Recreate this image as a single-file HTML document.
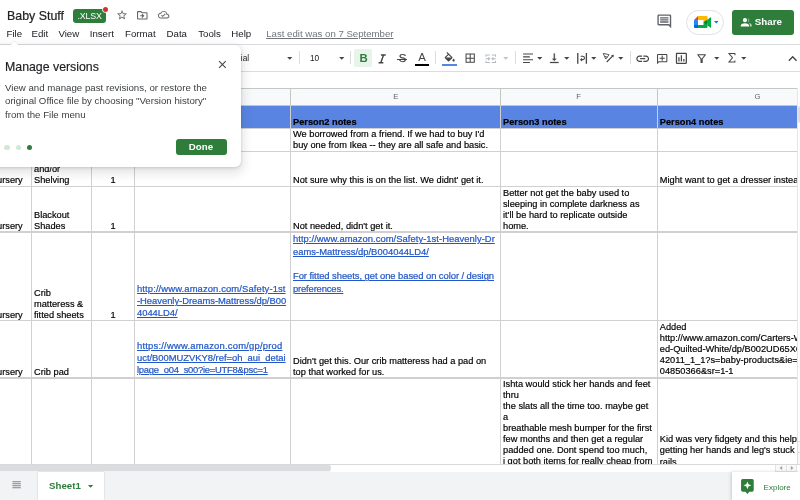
<!DOCTYPE html>
<html lang="en"><head><meta charset="utf-8"><title>Baby Stuff</title>
<style>
*{box-sizing:border-box;margin:0;padding:0}
html,body{width:800px;height:500px;overflow:hidden;background:#fff}
body{font-family:"Liberation Sans",Arial,sans-serif;color:#000;position:relative}
.abs,.ic,.sep,.t,.cell,.hl,.vl{position:absolute}
.ic{display:block;overflow:visible}
#grid,#top,#toolbar,#promo,#bottom{will-change:transform;position:absolute;left:0;top:0;width:800px;height:500px}
.t{white-space:pre;line-height:1}
.sep{width:1px;background:#dadce0}
.menu{font-size:9.7px;color:#202124;top:29px}
.cell{overflow:hidden;font-size:9.24px;line-height:11.09px;white-space:pre;color:#000;-webkit-text-stroke:.18px #000}
.cell>div{position:absolute;left:2px}
.lnk{color:#2257c5;-webkit-text-stroke:.22px #2257c5;text-decoration:underline;font-size:9.42px;line-height:12.3px}
.hl{height:1.25px;background:#d0d0d0;left:0}
.vl{width:1.15px;background:#d0d0d0}
.ch{font-size:7.6px;color:#5f6368;top:92.6px}
</style></head><body>

<div id="grid">
<div class="abs" style="left:0;top:88px;width:797px;height:17px;background:#f8f9fa"></div>
<div class="abs" style="left:0;top:105px;width:797px;height:22.8px;background:#5984e2"></div>
<span class="t ch" style="left:393.3px">E</span>
<span class="t ch" style="left:576.2px">F</span>
<span class="t ch" style="left:754.6px">G</span>
<div class="hl" style="top:88px;width:800px;background:#c4c7c5"></div>
<div class="hl" style="top:104.6px;width:797px;background:#c4c7c5"></div>
<div class="hl" style="top:127.5px;width:797px;background:#d0d0d0"></div>
<div class="hl" style="top:150.7px;width:797px;background:#d0d0d0"></div>
<div class="hl" style="top:185.8px;width:797px;background:#d0d0d0"></div>
<div class="hl" style="top:231.4px;width:797px;background:#d0d0d0"></div>
<div class="hl" style="top:320.1px;width:797px;background:#d0d0d0"></div>
<div class="hl" style="top:377.3px;width:797px;background:#d0d0d0"></div>
<div class="vl" style="left:31px;top:88px;height:376px"></div>
<div class="vl" style="left:31px;top:88px;height:17px;background:#c4c7c5"></div>
<div class="vl" style="left:91.3px;top:88px;height:376px"></div>
<div class="vl" style="left:91.3px;top:88px;height:17px;background:#c4c7c5"></div>
<div class="vl" style="left:134.2px;top:88px;height:376px"></div>
<div class="vl" style="left:134.2px;top:88px;height:17px;background:#c4c7c5"></div>
<div class="vl" style="left:290.2px;top:88px;height:376px"></div>
<div class="vl" style="left:290.2px;top:88px;height:17px;background:#c4c7c5"></div>
<div class="vl" style="left:500px;top:88px;height:376px"></div>
<div class="vl" style="left:500px;top:88px;height:17px;background:#c4c7c5"></div>
<div class="vl" style="left:656.8px;top:88px;height:376px"></div>
<div class="vl" style="left:656.8px;top:88px;height:17px;background:#c4c7c5"></div>
<div class="vl" style="left:796.8px;top:88px;height:376px"></div>
<div class="vl" style="left:796.8px;top:88px;height:17px;background:#c4c7c5"></div>
<div class="cell" style="left:291px;top:105px;width:209px;height:23px"><div class="" style="top:12.4px;font-weight:bold;">Person2 notes</div></div>
<div class="cell" style="left:501px;top:105px;width:156px;height:23px"><div class="" style="top:12.4px;font-weight:bold;">Person3 notes</div></div>
<div class="cell" style="left:657.8px;top:105px;width:139.20000000000005px;height:23px"><div class="" style="top:12.4px;font-weight:bold;">Person4 notes</div></div>
<div class="cell" style="left:291px;top:128px;width:209px;height:23px"><div class="" style="top:1px;">We borrowed from a friend. If we had to buy I'd<br>buy one from Ikea -- they are all safe and basic.</div></div>
<div class="cell" style="left:-11.6px;top:151px;width:42.6px;height:35px"><div class="" style="top:24.4px;">Nursery</div></div>
<div class="cell" style="left:32px;top:151px;width:59px;height:35px"><div class="" style="top:13.31px;">and/or<br>Shelving</div></div>
<div class="cell" style="left:92px;top:151px;width:42px;height:35px"><div class="" style="top:24.4px;left:0;right:0;text-align:center;">1</div></div>
<div class="cell" style="left:291px;top:151px;width:209px;height:35px"><div class="" style="top:24.4px;">Not sure why this is on the list. We didnt' get it.</div></div>
<div class="cell" style="left:657.8px;top:151px;width:139.20000000000005px;height:35px"><div class="" style="top:24.4px;">Might want to get a dresser instead of a changing table</div></div>
<div class="cell" style="left:-11.6px;top:186px;width:42.6px;height:46px"><div class="" style="top:35.1px;">Nursery</div></div>
<div class="cell" style="left:32px;top:186px;width:59px;height:46px"><div class="" style="top:24.01px;">Blackout<br>Shades</div></div>
<div class="cell" style="left:92px;top:186px;width:42px;height:46px"><div class="" style="top:35.1px;left:0;right:0;text-align:center;">1</div></div>
<div class="cell" style="left:291px;top:186px;width:209px;height:46px"><div class="" style="top:35.1px;">Not needed, didn't get it.</div></div>
<div class="cell" style="left:501px;top:186px;width:156px;height:46px"><div class="" style="top:1.8px;">Better not get the baby used to<br>sleeping in complete darkness as<br>it'll be hard to replicate outside<br>home.</div></div>
<div class="cell" style="left:-11.6px;top:232px;width:42.6px;height:88px"><div class="" style="top:78.2px;">Nursery</div></div>
<div class="cell" style="left:32px;top:232px;width:59px;height:88px"><div class="" style="top:56.02px;">Crib<br>matteress &amp;<br>fitted sheets</div></div>
<div class="cell" style="left:92px;top:232px;width:42px;height:88px"><div class="" style="top:78.2px;left:0;right:0;text-align:center;">1</div></div>
<div class="cell" style="left:135px;top:232px;width:155px;height:88px"><div class="lnk" style="top:50.8px;line-height:12.3px;"><span style="letter-spacing:0.118px">http://www.amazon.com/Safety-1st</span><br><span style="letter-spacing:-0.029px">-Heavenly-Dreams-Mattress/dp/B00</span><br><span style="letter-spacing:-0.037px">4044LD4/</span></div></div>
<div class="cell" style="left:291px;top:232px;width:209px;height:88px"><div class="lnk" style="top:1.2px;line-height:12.4px;"><span style="letter-spacing:0.036px">http://www.amazon.com/Safety-1st-Heavenly-Dr</span><br><span style="letter-spacing:0.014px">eams-Mattress/dp/B004044LD4/</span><br><br><span style="letter-spacing:-0.059px">For fitted sheets, get one based on color / design</span><br><span style="letter-spacing:-0.158px">preferences.</span></div></div>
<div class="cell" style="left:-11.6px;top:320px;width:42.6px;height:58px"><div class="" style="top:46.8px;">Nursery</div></div>
<div class="cell" style="left:32px;top:320px;width:59px;height:58px"><div class="" style="top:46.8px;">Crib pad</div></div>
<div class="cell" style="left:135px;top:320px;width:155px;height:58px"><div class="lnk" style="top:19.9px;line-height:12.2px;"><span style="letter-spacing:0.211px">https://www.amazon.com/gp/prod</span><br><span style="letter-spacing:-0.022px">uct/B00MUZVKY8/ref=oh_aui_detai</span><br><span style="letter-spacing:-0.254px">lpage_o04_s00?ie=UTF8&amp;psc=1</span></div></div>
<div class="cell" style="left:291px;top:320px;width:209px;height:58px"><div class="" style="top:35.6px;">Didn't get this. Our crib matteress had a pad on<br>top that worked for us.</div></div>
<div class="cell" style="left:657.8px;top:320px;width:139.20000000000005px;height:58px"><div class="" style="top:2px;">Added<br>http://www.amazon.com/Carters-Wat<br>ed-Quilted-White/dp/B002UD65XG<br>42011_1_1?s=baby-products&amp;ie=U<br>04850366&amp;sr=1-1</div></div>
<div class="cell" style="left:501px;top:378px;width:156px;height:86px"><div class="" style="top:0.7px;">Ishta would stick her hands and feet<br>thru<br>the slats all the time too. maybe get<br>a<br>breathable mesh bumper for the first<br>few months and then get a regular<br>padded one. Dont spend too much,<br>i got both items for really cheap from<br>amazon.</div></div>
<div class="cell" style="left:657.8px;top:378px;width:139.20000000000005px;height:86px"><div class="" style="top:56.4px;">Kid was very fidgety and this helped<br>getting her hands and leg's stuck in<br>rails</div></div>
</div>
<div id="bottom">
<div class="abs" style="left:797px;top:88px;width:3px;height:376px;background:#fff;border-left:1px solid #e6e6e6"></div>
<div class="abs" style="left:797.5px;top:106px;width:5px;height:17px;background:#dadce0;border-radius:3px"></div>
<div class="abs" style="left:0;top:464px;width:800px;height:7.5px;background:#fff;border-top:1px solid #d9d9d9"></div>
<div class="abs" style="left:0;top:464.5px;width:331px;height:7px;background:#f1f3f4"></div>
<div class="abs" style="left:-6px;top:465px;width:336.5px;height:6.2px;background:#dadce0;border-radius:3px"></div>
<div class="abs" style="left:775px;top:464.5px;width:22px;height:7px;background:#f8f9fa;border:1px solid #e3e3e3;border-top:none"></div>
<div class="abs" style="left:786px;top:464.5px;width:1px;height:7px;background:#e3e3e3"></div>
<svg class="ic" style="left:778.5px;top:466px" width="4" height="4" viewBox="0 0 4 4"><path fill="#9aa0a6" d="M3.2 0v4L.6 2z"/></svg>
<svg class="ic" style="left:789.6px;top:466px" width="4" height="4" viewBox="0 0 4 4"><path fill="#9aa0a6" d="M.8 0v4l2.600-2z"/></svg>
<div class="abs" style="left:797px;top:441px;width:3px;height:23px;background:#f8f9fa;border-left:1px solid #dadce0;border-top:1px solid #dadce0"></div>
<div class="abs" style="left:797px;top:452px;width:3px;height:1px;background:#dadce0"></div>
<div class="abs" style="left:0;top:471.5px;width:800px;height:28.5px;background:#f1f3f4"></div>
<div class="abs" style="left:37.5px;top:471.5px;width:66.5px;height:28.5px;background:#fff;box-shadow:0 0 1.5px rgba(60,64,67,.25)"></div>
<svg class="ic" style="left:11.2px;top:479.3px" width="11.2" height="11.2" viewBox="0 0 24 24" ><path fill="#80868b" d="M3 5h18v2.200H3zm0 4.300h18v2.200H3zm0 4.300h18v2.200H3zm0 4.300h18v2.200H3z"/></svg>
<span class="t" style="left:49px;top:481.4px;font-size:9.7px;color:#2e7d3a;font-weight:bold">Sheet1</span>
<svg class="ic" style="left:87.6px;top:484.8px" width="5.2" height="2.8" viewBox="0 0 10 5"><path fill="#2e7d3a" d="M0 0h10L5 5z"/></svg>
<div class="abs" style="left:732px;top:472px;width:68px;height:28px;background:#fff;box-shadow:-1px 0 3px rgba(60,64,67,.22)"></div>
<svg class="ic" style="left:741px;top:479.4px" width="12.800" height="15.200" viewBox="0 0 20 24"><path fill="#2e7d3a" d="M2.500 0h15A2.500 2.500 0 0 1 20 2.500v15a2.500 2.500 0 0 1-2.500 2.500H13l-3 3.600L7 20H2.500A2.500 2.500 0 0 1 0 17.500v-15A2.500 2.500 0 0 1 2.500 0z"/><path fill="#fff" d="M10 3.800l1.700 4.500 4.500 1.700-4.500 1.700L10 16.200l-1.700-4.500L3.800 10l4.500-1.700z"/></svg>
<span class="t" style="left:763.6px;top:483.8px;font-size:8px;color:#2e7d3a">Explore</span>
</div>
<div id="top">
<div class="abs" style="left:0;top:44px;width:800px;height:1px;background:#dadce0"></div>
<div class="abs" style="left:0;top:71px;width:800px;height:1px;background:#dadce0"></div>
<span class="t" style="left:7px;top:9.8px;font-size:12.4px;color:#202124;-webkit-text-stroke:.2px #202124">Baby Stuff</span>
<div class="abs" style="left:73.2px;top:8.6px;width:33px;height:14.8px;background:#2e7d3a;border-radius:3px"></div>
<span class="t" style="left:77.5px;top:12.4px;font-size:8.8px;color:#fff;letter-spacing:-.15px">.XLSX</span>
<div class="abs" style="left:102.7px;top:6.8px;width:5.4px;height:5.4px;border-radius:50%;background:#d93025;box-shadow:0 0 0 .8px #fff"></div>
<svg class="ic" style="left:115.9px;top:8.9px" width="12" height="12" viewBox="0 0 24 24" ><path fill="#5f6368" d="M22 9.24l-7.19-.62L12 2 9.19 8.63 2 9.24l5.46 4.73L5.82 21 12 17.27 18.18 21l-1.63-7.03L22 9.24zM12 15.4l-3.76 2.27 1-4.28-3.32-2.88 4.38-.38L12 6.1l1.71 4.04 4.38.38-3.32 2.88 1 4.28L12 15.4z"/></svg>
<svg class="ic" style="left:135.9px;top:8.7px" width="12.6" height="12.6" viewBox="0 0 24 24" ><path fill="#5f6368" d="M20 6h-8l-2-2H4c-1.1 0-2 .9-2 2v12c0 1.1.9 2 2 2h16c1.1 0 2-.9 2-2V8c0-1.1-.9-2-2-2zm0 12H4V6h5.17l2 2H20v10zm-7.84-6H8v2h4.16l-1.59 1.59L11.99 17 16 13.01 11.99 9l-1.41 1.41L12.16 12z"/></svg>
<svg class="ic" style="left:157.9px;top:9.4px" width="11.4" height="11.4" viewBox="0 0 24 24" ><path fill="#5f6368" d="M19.35 10.04C18.67 6.59 15.64 4 12 4 9.11 4 6.6 5.64 5.35 8.04 2.34 8.36 0 10.91 0 14c0 3.31 2.69 6 6 6h13c2.76 0 5-2.24 5-5 0-2.64-2.05-4.78-4.65-4.96zM19 18H6c-2.21 0-4-1.79-4-4 0-2.05 1.53-3.76 3.56-3.97l1.07-.11.5-.95C8.08 7.14 9.94 6 12 6c2.62 0 4.88 1.86 5.39 4.43l.3 1.5 1.53.11c1.56.1 2.78 1.41 2.78 2.96 0 1.65-1.35 3-3 3zm-9-3.82l-2.09-2.09L6.5 13.5 10 17l6.01-6.01-1.41-1.41z"/></svg>
<span class="t menu" style="left:6.5px">File</span>
<span class="t menu" style="left:31.5px">Edit</span>
<span class="t menu" style="left:58.4px">View</span>
<span class="t menu" style="left:89.7px">Insert</span>
<span class="t menu" style="left:125px">Format</span>
<span class="t menu" style="left:166.5px">Data</span>
<span class="t menu" style="left:198.2px">Tools</span>
<span class="t menu" style="left:231.3px">Help</span>
<span class="t" style="left:266.2px;top:29px;font-size:9.64px;color:#70757a;text-decoration:underline">Last edit was on 7 September</span>
<svg class="ic" style="left:656.1px;top:13.4px" width="16.6" height="16.6" viewBox="0 0 24 24" ><path fill="#5f6368" d="M21.99 4c0-1.1-.89-2-1.99-2H4c-1.1 0-2 .9-2 2v12c0 1.1.9 2 2 2h14l4 4-.01-18zM20 4v13.17L18.83 16H4V4h16zM6 12h12v2H6zm0-3h12v2H6zm0-3h12v2H6z"/></svg>
<div class="abs" style="left:686.3px;top:9.6px;width:37.4px;height:25.4px;border:1px solid #dfe1e5;border-radius:13px;background:#fff"></div>
<svg class="ic" style="left:693.7px;top:16.2px" width="17" height="12.200" viewBox="0 0 34 24">
<path fill="#00832d" d="M19 12l3.300 3.800 4.500 2.800.8-6.600-.8-6.500-4.600 2.500z"/>
<path fill="#0066da" d="M0 18v4a2 2 0 0 0 2 2h6l1.200-4.500L8 18l-4-1.200z"/>
<path fill="#e94235" d="M8 0L0 8l4 1.200L8 8l1.200-3.800z"/>
<path fill="#2684fc" d="M0 8h8v10H0z"/>
<path fill="#00ac47" d="M32.300 2.800L27 7.200v11.400l5.300 4.400c.8.600 1.700 0 1.700-.9V3.700c0-.9-1-1.500-1.700-.9zM19 12v6H8v6h17a2 2 0 0 0 2-2v-3.400z"/>
<path fill="#ffba00" d="M25 0H8v8h11v4l8-4.800V2a2 2 0 0 0-2-2z"/>
</svg>
<svg class="ic" style="left:713.5px;top:20.95px" width="4.6" height="2.5" viewBox="0 0 10 5"><path fill="#1a73e8" d="M0 0h10L5 5z"/></svg>
<div class="abs" style="left:732px;top:9.6px;width:62px;height:25px;background:#2e7d3a;border-radius:3px"></div>
<svg class="ic" style="left:739.8px;top:15.6px" width="12.500" height="12.500" viewBox="0 0 24 24"><path fill="#fff" d="M9.500 12a4 4 0 1 0 0-8 4 4 0 0 0 0 8zm0 2c-2.700 0-8 1.340-8 4v2h16v-2c0-2.660-5.300-4-8-4z"/><path fill="#fff" fill-opacity=".7" d="M15 4.200a4 4 0 0 1 0 7.600 5.800 5.800 0 0 0 0-7.600zM17.500 13.600c2.400.6 5 1.900 5 4.400v2h-3.500v-2c0-1.800-.6-3.300-1.500-4.400z"/></svg>
<span class="t" style="left:754.7px;top:17.2px;font-size:9.8px;color:#fff;font-weight:bold">Share</span>
</div>
<div id="toolbar">
<span class="t" style="left:232.5px;top:53.6px;font-size:8.3px;color:#202124">Arial</span>
<svg class="ic" style="left:287.25px;top:57.32px" width="5.5" height="2.65" viewBox="0 0 10 5"><path fill="#444746" d="M0 0h10L5 5z"/></svg>
<div class="sep" style="left:299.1px;top:51.2px;height:13.299999999999997px"></div>
<span class="t" style="left:310px;top:53.6px;font-size:8.3px;color:#202124">10</span>
<svg class="ic" style="left:339.05px;top:57.32px" width="5.5" height="2.65" viewBox="0 0 10 5"><path fill="#444746" d="M0 0h10L5 5z"/></svg>
<div class="sep" style="left:349.8px;top:51.2px;height:13.299999999999997px"></div>
<div class="abs" style="left:354.3px;top:49.3px;width:18px;height:17.8px;background:#e6f4ea;border-radius:2px"></div>
<span class="t" style="left:359.6px;top:53.1px;font-size:11.4px;font-weight:bold;color:#2e7d3a">B</span>
<svg class="ic" style="left:375.4px;top:52.2px" width="14.3" height="14.3" viewBox="0 0 24 24" fill="none" stroke="#444746" stroke-width="2.4"><path d="M10 4.900h8M6 17.900h8M14.300 4.900L9.700 17.900"/></svg>
<span class="t" style="left:398.8px;top:52.6px;font-size:11.4px;color:#444746;-webkit-text-stroke:.25px #444746">S</span>
<div class="abs" style="left:397.4px;top:58.5px;width:9.8px;height:1.2px;background:#444746"></div>
<span class="t" style="left:418.2px;top:51.7px;font-size:11.4px;color:#444746">A</span>
<div class="abs" style="left:415.2px;top:63.7px;width:14.2px;height:2.3px;background:#000"></div>
<div class="sep" style="left:435px;top:51.2px;height:13.299999999999997px"></div>
<svg class="ic" style="left:442.8px;top:52.3px" width="13.4" height="11.2" viewBox="0 0 24 20" ><path fill="#444746" d="M16.56 8.94L7.62 0 6.21 1.41l2.38 2.38-5.15 5.15c-.59.59-.59 1.54 0 2.12l5.5 5.5c.29.29.68.44 1.06.44s.77-.15 1.06-.44l5.5-5.5c.59-.58.59-1.53 0-2.12zM5.21 10L10 5.21 14.79 10H5.21zM19 11.5s-2 2.17-2 3.5c0 1.1.9 2 2 2s2-.9 2-2c0-1.33-2-3.5-2-3.5z"/></svg>
<div class="abs" style="left:442px;top:63.7px;width:14.7px;height:2.4px;background:#5984e2"></div>
<svg class="ic" style="left:463.6px;top:52.3px" width="12.4" height="12.4" viewBox="0 0 24 24" ><path fill="#444746" d="M3 3v18h18V3H3zm8 16H5v-6h6v6zm0-8H5V5h6v6zm8 8h-6v-6h6v6zm0-8h-6V5h6v6z"/></svg>
<svg class="ic" style="left:484.9px;top:54.15px" width="11.5" height="9.58" viewBox="0 0 24 20" fill="none" stroke="#b6babf" stroke-width="2.1"><path d="M2 6V2h8M14 2h8v4M22 14v4h-8M10 18H2v-4M1.500 10h8M6.500 7l3 3-3 3M22.500 10h-8M17.500 7l-3 3 3 3"/></svg>
<svg class="ic" style="left:503.05px;top:57.32px" width="5.5" height="2.65" viewBox="0 0 10 5"><path fill="#bfc3c7" d="M0 0h10L5 5z"/></svg>
<div class="sep" style="left:515px;top:51.2px;height:13.299999999999997px"></div>
<svg class="ic" style="left:521.5px;top:52.4px" width="12.6" height="12.6" viewBox="0 0 24 24" fill="none" stroke="#444746" stroke-width="2"><path d="M2 4h19M2 9.300h13M2 14.600h19M2 19.900h13"/></svg>
<svg class="ic" style="left:536.55px;top:57.32px" width="5.5" height="2.65" viewBox="0 0 10 5"><path fill="#444746" d="M0 0h10L5 5z"/></svg>
<svg class="ic" style="left:548.2px;top:52.4px" width="12.6" height="12.6" viewBox="0 0 24 24" stroke="#444746" stroke-width=".5"><path fill="#444746" d="M16 13h-3V3h-2v10H8l4 4 4-4zM4 19v2h16v-2H4z"/></svg>
<svg class="ic" style="left:563.55px;top:57.32px" width="5.5" height="2.65" viewBox="0 0 10 5"><path fill="#444746" d="M0 0h10L5 5z"/></svg>
<svg class="ic" style="left:575.8px;top:52.4px" width="12.6" height="12.6" viewBox="0 0 24 24" fill="none" stroke="#444746" stroke-width="2.5"><path d="M3.400 1.800v20.400M19.800 1.800v20.400"/><path d="M8.800 8h4a3.300 3.300 0 0 1 0 6.600H10" stroke-width="2.100"/><path d="M11.600 11L7.400 14.600l4.200 3.600z" fill="#444746" stroke="none"/></svg>
<svg class="ic" style="left:590.75px;top:57.32px" width="5.5" height="2.65" viewBox="0 0 10 5"><path fill="#444746" d="M0 0h10L5 5z"/></svg>
<svg class="ic" style="left:602.4px;top:52.4px" width="12.6" height="12.6" viewBox="0 0 24 24" fill="none" stroke="#444746" stroke-width="2"><path d="M2.300 2.600l11.200 2.600-6.400 8.300zM5.300 8.200l5.200 2" stroke-width="1.700" stroke-linejoin="round"/><path d="M9 19l11.500-11.500" stroke-width="2.200"/><path d="M22.600 5.200l-1 5.400-4.400-4.400z" fill="#444746" stroke="none"/></svg>
<svg class="ic" style="left:617.75px;top:57.32px" width="5.5" height="2.65" viewBox="0 0 10 5"><path fill="#444746" d="M0 0h10L5 5z"/></svg>
<div class="sep" style="left:629.5px;top:51.2px;height:13.299999999999997px"></div>
<svg class="ic" style="left:634.9px;top:50.9px" width="15.4" height="15.4" viewBox="0 0 24 24" ><path fill="#444746" d="M3.9 12c0-1.71 1.39-3.1 3.1-3.1h4V7H7c-2.76 0-5 2.24-5 5s2.24 5 5 5h4v-1.9H7c-1.71 0-3.1-1.39-3.1-3.1zM8 13h8v-2H8v2zm9-6h-4v1.9h4c1.71 0 3.1 1.39 3.1 3.1s-1.39 3.1-3.1 3.1h-4V17h4c2.76 0 5-2.24 5-5s-2.24-5-5-5z"/></svg>
<svg class="ic" style="left:655.8px;top:52.6px" width="12.4" height="12.4" viewBox="0 0 24 24" transform="scale(-1,1)"><path fill="#444746" d="M22 4c0-1.1-.9-2-2-2H4c-1.1 0-2 .9-2 2v12c0 1.1.9 2 2 2h14l4 4V4zm-2 13.17L18.83 16H4V4h16v13.17zM11 5h2v4h4v2h-4v4h-2v-4H7V9h4z"/></svg>
<svg class="ic" style="left:674px;top:51px" width="14.8" height="14.8" viewBox="0 0 24 24" ><path fill="#444746" d="M9 17H7v-7h2v7zm4 0h-2V7h2v10zm4 0h-2v-4h2v4zm2 2H5V5h14v14zm0-16H5c-1.1 0-2 .9-2 2v14c0 1.1.9 2 2 2h14c1.1 0 2-.9 2-2V5c0-1.1-.9-2-2-2z"/></svg>
<svg class="ic" style="left:695.2px;top:52.4px" width="13.2" height="13.2" viewBox="0 0 24 24" ><path fill="#444746" d="M7 6h10l-5.01 6.3L7 6zm-2.75-.39C6.27 8.2 10 13 10 13v6c0 .55.45 1 1 1h2c.55 0 1-.45 1-1v-6s3.72-4.8 5.74-7.39c.51-.66.04-1.61-.79-1.61H5.04c-.83 0-1.3.95-.79 1.61z"/></svg>
<svg class="ic" style="left:714.15px;top:57.32px" width="5.5" height="2.65" viewBox="0 0 10 5"><path fill="#444746" d="M0 0h10L5 5z"/></svg>
<svg class="ic" style="left:724.9px;top:51.05px" width="13.6" height="13.6" viewBox="0 0 24 24" fill="none" stroke="#444746" stroke-width="1.8"><path d="M17.500 7.300V4.500H7L13.200 12 7 19.500h10.500v-2.800" stroke-linejoin="miter"/></svg>
<svg class="ic" style="left:741.15px;top:57.32px" width="5.5" height="2.65" viewBox="0 0 10 5"><path fill="#444746" d="M0 0h10L5 5z"/></svg>
<svg class="ic" style="left:783.7px;top:50.2px" width="17.4" height="17.4" viewBox="0 0 24 24" ><path fill="#444746" d="M12 8l-6 6 1.41 1.41L12 10.83l4.59 4.58L18 14z"/></svg>
</div>
<div id="promo">
<div class="abs" style="left:-10px;top:44.5px;width:251px;height:122px;background:#fff;border-radius:6px;box-shadow:0 1px 3px rgba(60,64,67,.2),0 4px 10px 3px rgba(60,64,67,.13)"></div>
<svg class="ic" style="left:8.3px;top:40.9px" width="13" height="6.500" viewBox="0 0 13 6.500"><path fill="#fff" d="M0 6.500L6.500 0 13 6.500z"/><path fill="none" stroke="#e3e5e8" stroke-width=".7" d="M1.800 4.700L6.500 0l4.700 4.700"/></svg>
<span class="t" style="left:5px;top:60.6px;font-size:12.34px;color:#202124;-webkit-text-stroke:.15px #202124">Manage versions</span>
<svg class="ic" style="left:216.1px;top:58.1px" width="12.8" height="12.8" viewBox="0 0 24 24" ><path fill="#444746" d="M19 6.41L17.59 5 12 10.59 6.41 5 5 6.41 10.59 12 5 17.59 6.41 19 12 13.41 17.59 19 19 17.59 13.41 12z"/></svg>
<div class="abs" style="left:5px;top:80.5px;font-size:9.68px;line-height:13.6px;color:#3c4043;white-space:pre">View and manage past revisions, or restore the
original Office file by choosing "Version history"
from the File menu</div>
<div class="abs" style="left:4.3px;top:144.5px;width:5.4px;height:5.4px;border-radius:50%;background:#ceead6"></div>
<div class="abs" style="left:15.8px;top:144.5px;width:5.4px;height:5.4px;border-radius:50%;background:#ceead6"></div>
<div class="abs" style="left:26.8px;top:144.5px;width:5.4px;height:5.4px;border-radius:50%;background:#2e7d3a"></div>
<div class="abs" style="left:175.9px;top:138.5px;width:50.8px;height:16.6px;background:#2e7d3a;border-radius:3px"></div>
<span class="t" style="left:188.8px;top:142.3px;font-size:9.7px;color:#fff;font-weight:bold">Done</span>
</div>
</body></html>
